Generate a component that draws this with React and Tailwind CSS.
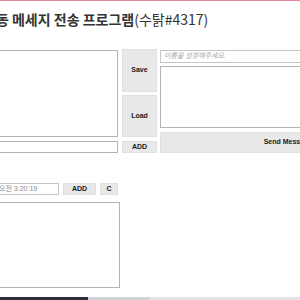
const font = { fontFamily: '"Liberation Sans", "Noto Sans CJK KR", sans-serif' }

const Btn = ({ className, children }) => (
  <div
    className={`flex items-center justify-center bg-[#e8e8e8] border border-[#e0e0e0] text-[7px] font-bold text-[#1a1a1a] ${className}`}
  >
    {children}
  </div>
)

export default function App() {
  return (
    <div
      className="w-[300px] h-[300px] overflow-hidden bg-white flex flex-col"
      style={{ fontFamily: '"Noto Sans CJK KR", sans-serif' }}
    >
      <div className="h-[1px] bg-[#e8869a] shrink-0" />

      {/* Title */}
      <div className="ml-[-17px] mt-[9px] h-[18px] whitespace-nowrap text-[14px] leading-[18px] text-[#333]">
        <span className="font-semibold">자동 메세지 전송 프로그램</span>
        <span className="font-normal">(수탉#4317)</span>
      </div>

      {/* Upper block */}
      <div className="ml-[-40px] mt-[21px] flex items-start gap-[4px] w-[500px]" style={font}>
        <div className="w-[158px] flex flex-col gap-[4px] pt-[1px]">
          <div className="h-[87px] border border-[#b4b4b4] bg-white" />
          <div className="h-[12px] border border-[#b4b4b4] bg-white" />
        </div>
        <div className="w-[35px] flex flex-col">
          <Btn className="h-[43px]">Save</Btn>
          <Btn className="h-[42px] mt-[3px]">Load</Btn>
          <Btn className="h-[12px] mt-[4px]">ADD</Btn>
        </div>
        <div className="w-[256px] flex flex-col gap-[3px] pt-[1px] ml-[-1px]">
          <div className="h-[13px] border border-[#c4c4c4] flex items-center px-[3px] text-[7px] italic text-[#a8a8a8]">
            이름을 설정해주세요.
          </div>
          <div className="h-[62px] border border-[#b4b4b4] bg-white" />
          <Btn className="h-[21px] mt-[1px]">Send Message</Btn>
        </div>
      </div>

      {/* Lower block */}
      <div className="ml-[-4px] mt-[30px] flex items-center gap-[4px]" style={font}>
        <div className="w-[63px] h-[12px] border border-[#c4c4c4] flex items-center pl-[2px] text-[7px] text-[#8a8a8a] whitespace-nowrap overflow-hidden">
          오전 3:20:19
        </div>
        <Btn className="w-[33px] h-[12px]">ADD</Btn>
        <Btn className="w-[18px] h-[12px]">C</Btn>
      </div>
      <div className="ml-[-40px] mt-[7px] w-[160px] h-[86px] border border-[#b4b4b4] bg-white" />

      {/* Taskbar */}
      <div className="mt-auto h-[3px] flex shrink-0">
        <div className="w-[88px] bg-[#2e2e3c]" />
        <div className="w-[62px] bg-[#cfd4d9]" />
        <div className="flex-1 bg-[#e4e4e4]" />
      </div>
    </div>
  )
}
